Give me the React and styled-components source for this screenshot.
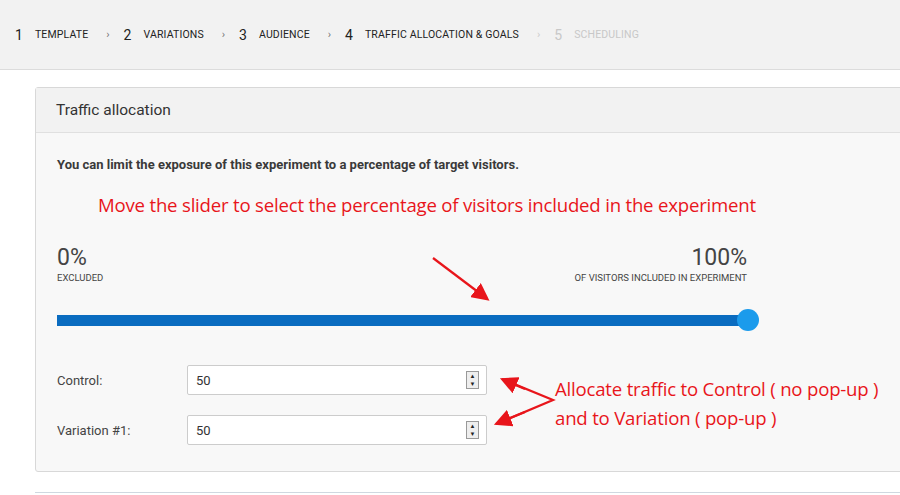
import React from "react";
import styled, { createGlobalStyle } from "styled-components";

const Global = createGlobalStyle`
  body { margin: 0; background: #fff; font-family: Roboto, "Liberation Sans", sans-serif; }
`;

const Page = styled.div`
  position: relative;
  width: 900px;
  height: 495px;
  overflow: hidden;
`;

const StepBar = styled.div`
  height: 70px;
  background: #f2f2f2;
  border-bottom: 1px solid #dcdcdc;
  display: flex;
  align-items: center;
  padding-left: 15px;
  box-sizing: border-box;
`;

const Step = styled.div`
  display: flex;
  align-items: center;
  color: ${({ $off }) => ($off ? "#c8c8c8" : "#222")};
`;

const StepNum = styled.span`
  font-size: 14px;
  margin-right: 12px;
`;

const StepLabel = styled.span`
  font-size: 10.5px;
  letter-spacing: 0.15px;
`;

const Chevron = styled.span`
  font-size: 11px;
  color: ${({ $off }) => ($off ? "#ccc" : "#777")};
  margin: 0 14px 0 18px;
`;

const Card = styled.div`
  margin: 17px 0 0 35px;
  width: 900px;
  height: 385px;
  border: 1px solid #d8d8d8;
  border-radius: 3px;
  background: #f8f8f8;
  box-sizing: border-box;
`;

const CardHeader = styled.div`
  height: 44px;
  background: #f2f2f2;
  border-bottom: 1px solid #e0e0e0;
  display: flex;
  align-items: center;
  padding-left: 20px;
  font-size: 15.5px;
  color: #333;
`;

const CardBody = styled.div`
  padding: 24px 0 0 21px;
`;

const Lead = styled.div`
  font-size: 13px;
  font-weight: 700;
  color: #3a3a3a;
`;

const Figures = styled.div`
  margin-top: 74px;
  width: 690px;
  display: flex;
  justify-content: space-between;
`;

const Figure = styled.div`
  display: flex;
  flex-direction: column;
  align-items: ${({ $right }) => ($right ? "flex-end" : "flex-start")};
`;

const Big = styled.span`
  font-size: 23px;
  color: #444;
  line-height: 24px;
`;

const Small = styled.span`
  font-size: 9.5px;
  color: #444;
  margin-top: 2px;
`;

const Track = styled.div`
  margin-top: 30px;
  width: 690px;
  height: 14px;
  display: flex;
  align-items: center;
  position: relative;
`;

const Fill = styled.div`
  flex: 1;
  height: 11px;
  background: #0a6cc0;
`;

const Thumb = styled.div`
  position: absolute;
  right: -12px;
  top: -4px;
  width: 22px;
  height: 22px;
  border-radius: 50%;
  background: #1b9bec;
`;

const Rows = styled.div`
  margin-top: 38px;
  display: flex;
  flex-direction: column;
  gap: 20px;
`;

const Row = styled.div`
  display: flex;
  align-items: center;
`;

const RowLabel = styled.span`
  width: 130px;
  font-size: 13px;
  color: #444;
`;

const Field = styled.div`
  width: 300px;
  height: 30px;
  box-sizing: border-box;
  border: 1px solid #ccc;
  border-radius: 2px;
  background: #fff;
  display: flex;
  align-items: center;
  justify-content: space-between;
  padding: 0 7px 0 8px;
  font-size: 13px;
  color: #333;
`;

const Spin = styled.div`
  width: 11px;
  height: 16px;
  border: 1px solid #999;
  background: #eee;
  display: flex;
  flex-direction: column;
  font-size: 6px;
  line-height: 8px;
  text-align: center;
  color: #222;
`;

const BottomLine = styled.div`
  margin: 20px 0 0 35px;
  border-top: 1px solid #cfd8e0;
`;

const Note = styled.div`
  position: absolute;
  left: ${({ $x }) => $x}px;
  top: ${({ $y }) => $y}px;
  color: #e8151b;
  font-family: "Open Sans", sans-serif;
  font-size: 18.6px;
  line-height: 29px;
  letter-spacing: -0.2px;
  white-space: nowrap;
`;

const Arrows = styled.svg`
  position: absolute;
  left: 0;
  top: 0;
`;

const steps = [
  ["1", "TEMPLATE"],
  ["2", "VARIATIONS"],
  ["3", "AUDIENCE"],
  ["4", "TRAFFIC ALLOCATION & GOALS"],
  ["5", "SCHEDULING", true],
];

const Input = ({ value }) => (
  <Field>
    {value}
    <Spin>
      <span>▲</span>
      <span>▼</span>
    </Spin>
  </Field>
);

export default function App() {
  return (
    <Page>
      <Global />
      <StepBar>
        {steps.map(([n, l, off], i) => (
          <React.Fragment key={n}>
            {i > 0 && <Chevron $off={off}>›</Chevron>}
            <Step $off={off}>
              <StepNum>{n}</StepNum>
              <StepLabel>{l}</StepLabel>
            </Step>
          </React.Fragment>
        ))}
      </StepBar>
      <Card>
        <CardHeader>Traffic allocation</CardHeader>
        <CardBody>
          <Lead>You can limit the exposure of this experiment to a percentage of target visitors.</Lead>
          <Figures>
            <Figure>
              <Big>0%</Big>
              <Small>EXCLUDED</Small>
            </Figure>
            <Figure $right>
              <Big>100%</Big>
              <Small>OF VISITORS INCLUDED IN EXPERIMENT</Small>
            </Figure>
          </Figures>
          <Track>
            <Fill />
            <Thumb />
          </Track>
          <Rows>
            <Row>
              <RowLabel>Control:</RowLabel>
              <Input value="50" />
            </Row>
            <Row>
              <RowLabel>Variation #1:</RowLabel>
              <Input value="50" />
            </Row>
          </Rows>
        </CardBody>
      </Card>
      <BottomLine />
      <Note $x={98} $y={190}>Move the slider to select the percentage of visitors included in the experiment</Note>
      <Note $x={555} $y={374}>
        Allocate traffic to Control ( no pop-up )
        <br />
        and to Variation ( pop-up )
      </Note>
      <Arrows width="900" height="495">
        <defs>
          <marker id="ah" markerWidth="8" markerHeight="8" refX="6" refY="4" orient="auto">
            <path d="M0,0 L8,4 L0,8 Z" fill="#e8151b" />
          </marker>
        </defs>
        <g stroke="#e8151b" strokeWidth="2.2" fill="none">
          <line x1="433" y1="258" x2="486" y2="298" markerEnd="url(#ah)" />
          <polyline points="502,379 553,400 496,424" />
          <line x1="525" y1="389" x2="504" y2="380" markerEnd="url(#ah)" />
          <line x1="525" y1="412" x2="498" y2="423" markerEnd="url(#ah)" />
        </g>
      </Arrows>
    </Page>
  );
}
